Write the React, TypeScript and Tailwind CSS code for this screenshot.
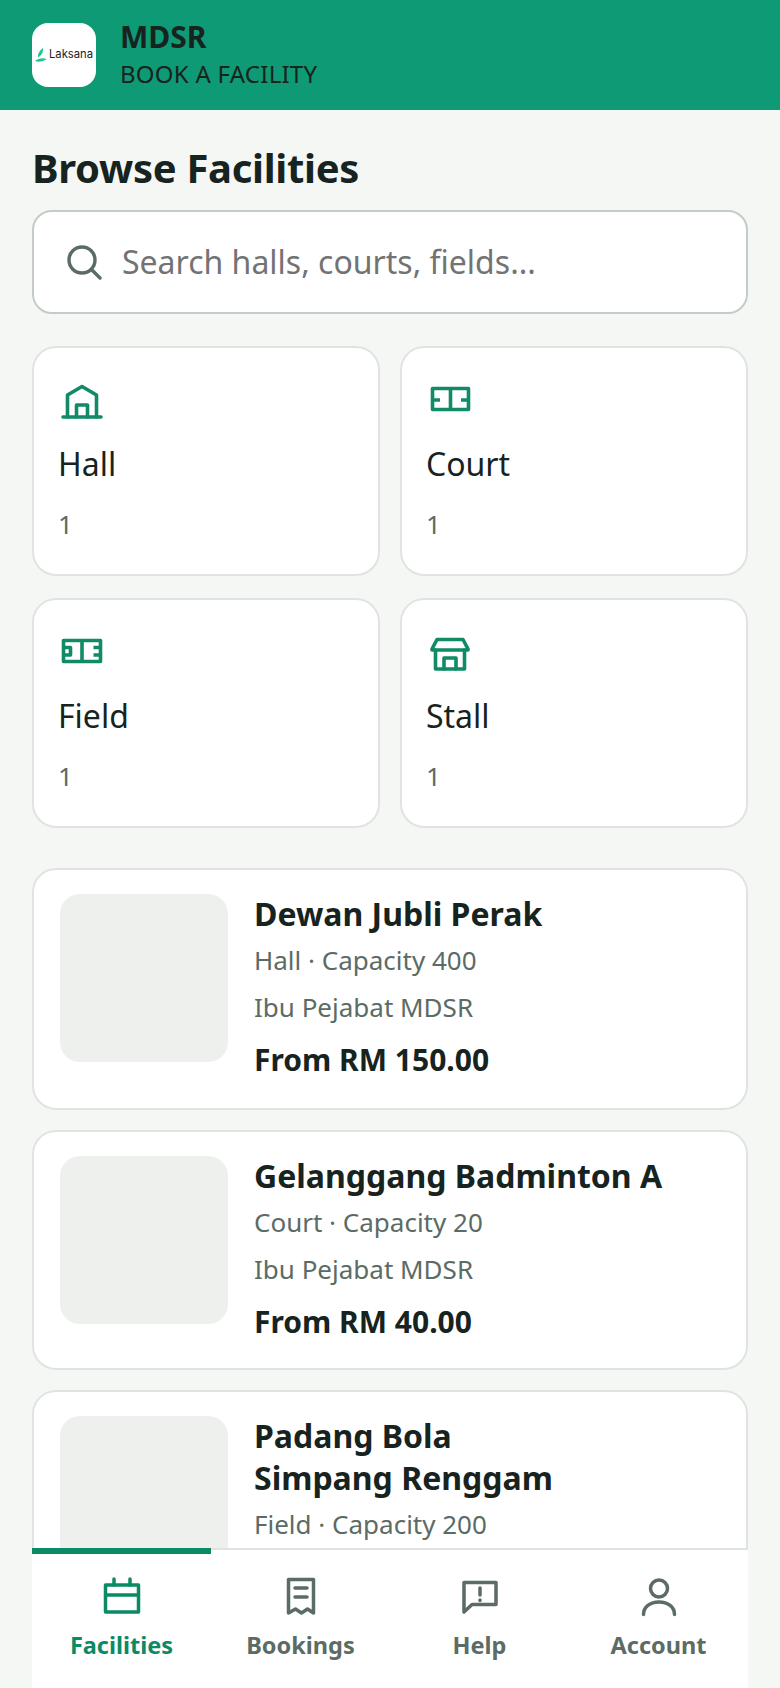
const categories = [
  { name: "Hall", icon: <HallIcon /> },
  { name: "Court", icon: <CourtIcon /> },
  { name: "Field", icon: <FieldIcon /> },
  { name: "Stall", icon: <StallIcon /> },
];

const facilities = [
  { name: ["Dewan Jubli Perak"], meta: "Hall · Capacity 400", place: "Ibu Pejabat MDSR", price: "From RM 150.00" },
  { name: ["Gelanggang Badminton A"], meta: "Court · Capacity 20", place: "Ibu Pejabat MDSR", price: "From RM 40.00" },
  { name: ["Padang Bola", "Simpang Renggam"], meta: "Field · Capacity 200", place: "Ibu Pejabat MDSR", price: "From RM 80.00" },
];

function HallIcon() {
  return (
    <svg width="48" height="48" viewBox="0 0 48 48" fill="none" stroke="currentColor" strokeWidth="3.600" strokeLinecap="round" strokeLinejoin="round">
      <path d="M5 39h38" />
      <path d="M9.500 39V17L24 8.500 38.500 17v22" />
      <path d="M18.500 39V27h11v12" />
    </svg>
  );
}

function CourtIcon() {
  return (
    <svg width="48" height="48" viewBox="0 0 48 48" fill="none" stroke="currentColor" strokeWidth="3.600" strokeLinejoin="round">
      <rect x="6.500" y="10.500" width="36" height="21" />
      <path d="M24.500 10.500v21M6.500 22H14M35 22h7.500" />
    </svg>
  );
}

function FieldIcon() {
  return (
    <svg width="48" height="48" viewBox="0 0 48 48" fill="none" stroke="currentColor" strokeWidth="3.600" strokeLinejoin="round">
      <rect x="5.500" y="10.500" width="37" height="21" />
      <path d="M24 10.500v21M5.500 17.500h7v7.500h-7M42.500 17.500h-7M42.500 25h-7" />
    </svg>
  );
}

function StallIcon() {
  return (
    <svg width="48" height="48" viewBox="0 0 48 48" fill="none" stroke="currentColor" strokeWidth="3.600" strokeLinecap="round" strokeLinejoin="round">
      <path d="M11 9.500h26l5 9.500v1H6v-1z" />
      <path d="M9.500 20v19h29V20" />
      <path d="M18 39V28h12v11" />
    </svg>
  );
}

function Logo() {
  return (
    <div className="flex h-16 w-16 shrink-0 items-center justify-center gap-[2px] rounded-2xl bg-white">
      <svg width="12" height="14" viewBox="0 0 12 14" fill="#1fc98c" className="shrink-0">
        <path d="M8 0C8.500 3.500 7 7 3 9.500 2.500 6 4.500 2.500 8 0z" />
        <path d="M0 13c3-2.500 7.500-3.500 11.500-2C8.500 13.500 3.500 14.500 0 13z" />
      </svg>
      <span className="text-[11.250px] leading-none text-[#222] [font-family:'Inter',sans-serif]">Laksana</span>
    </div>
  );
}

function NavItem({ label, active, children }: { label: string; active?: boolean; children: React.ReactNode }) {
  return (
    <div className={`relative flex flex-1 flex-col items-center pt-[22px] ${active ? "text-[#0b8a66]" : "text-[#5b6b65]"}`}>
      {active && <div className="absolute -top-[2px] left-0 right-0 h-[6px] bg-[#0b8a66]" />}
      {children}
      <span className="mt-[8px] text-[23.500px] font-bold leading-[34px]">{label}</span>
    </div>
  );
}

export default function App() {
  return (
    <div className="flex h-[1688px] w-[780px] flex-col overflow-hidden bg-[#f5f7f5] text-[#17231e] [font-family:'Noto_Sans',sans-serif]">
      <header className="flex h-[110px] shrink-0 items-center gap-6 bg-[#0e9a74] px-8">
        <Logo />
        <div className="-mt-[2px]">
          <div className="text-[30px] font-bold leading-[38px]">MDSR</div>
          <div className="mt-[2px] text-[24px] leading-[32px] tracking-[0.25px]">BOOK A FACILITY</div>
        </div>
      </header>

      <main className="min-h-0 flex-1 overflow-hidden px-8 pt-[31px]">
        <h1 className="text-[40px] font-bold leading-[54px] tracking-[-0.3px]">Browse Facilities</h1>

        <div className="mt-[15px] flex h-[104px] items-center gap-[20px] rounded-[20px] border-2 border-[#c5ccc8] bg-white px-[32px]">
          <svg width="36" height="36" viewBox="0 0 36 36" fill="none" stroke="#5b6b65" strokeWidth="3.400" strokeLinecap="round" className="shrink-0">
            <circle cx="16" cy="16" r="13" />
            <path d="M26 26l8 8" />
          </svg>
          <span className="text-[32px] text-[#737373]">Search halls, courts, fields...</span>
        </div>

        <div className="mt-[32px] grid grid-cols-2 gap-x-[20px] gap-y-[22px]">
          {categories.map((c) => (
            <div key={c.name} className="h-[230px] rounded-[24px] border-2 border-[#e0e4e1] bg-white px-6 pt-[30px]">
              <div className="h-[48px] text-[#118a67]">{c.icon}</div>
              <div className="mt-[16px] text-[32px] leading-[44px]">{c.name}</div>
              <div className="mt-[20px] text-[26px] leading-[36px] text-[#5b6b65]">1</div>
            </div>
          ))}
        </div>

        <div className="mt-[40px] flex flex-col gap-[20px]">
          {facilities.map((f) => (
            <div key={f.place + f.meta} className="flex gap-[26px] rounded-[24px] border-2 border-[#e0e4e1] bg-white px-[26px] py-[24px] first:pb-[26px]">
              <div className="h-[168px] w-[168px] shrink-0 rounded-[20px] bg-[#eef0ee]" />
              <div>
                <div className="-mt-[1px] text-[32px] font-bold leading-[42px]">
                  {f.name.map((line) => (
                    <div key={line}>{line}</div>
                  ))}
                </div>
                <div className="mt-[3px] text-[26px] leading-[44px] text-[#5b6b65]">{f.meta}</div>
                <div className="mt-[3px] text-[26px] leading-[44px] text-[#5b6b65]">{f.place}</div>
                <div className="mt-[9px] text-[30px] font-bold leading-[44px]">{f.price}</div>
              </div>
            </div>
          ))}
        </div>
      </main>

      <nav className="mx-8 flex h-[140px] shrink-0 border-t-2 border-[#e0e4e1] bg-white">
        <NavItem label="Facilities" active>
          <svg width="48" height="48" viewBox="0 0 48 48" fill="none" stroke="currentColor" strokeWidth="3.500" strokeLinejoin="round" strokeLinecap="round">
            <rect x="7.500" y="13" width="33" height="27" />
            <path d="M7.500 23h33M16 7v6M32 7v6" />
          </svg>
        </NavItem>
        <NavItem label="Bookings">
          <svg width="48" height="48" viewBox="0 0 48 48" fill="none" stroke="currentColor" strokeWidth="3.500" strokeLinejoin="round" strokeLinecap="round">
            <path d="M11.500 7.500h25V41l-6-4-6 4-6-4-7 4z" />
            <path d="M18 16h12M18 25h12" />
          </svg>
        </NavItem>
        <NavItem label="Help">
          <svg width="48" height="48" viewBox="0 0 48 48" fill="none" stroke="currentColor" strokeWidth="3.500" strokeLinejoin="round" strokeLinecap="round">
            <path d="M8 10.500h32v22H16L8 40z" />
            <path d="M24 16v7M24 28v.5" />
          </svg>
        </NavItem>
        <NavItem label="Account">
          <svg width="48" height="48" viewBox="0 0 48 48" fill="none" stroke="currentColor" strokeWidth="3.500" strokeLinecap="round">
            <circle cx="24" cy="16.500" r="8.500" />
            <path d="M8.500 42.500C8.500 35 15 30 24 30s15.500 5 15.500 12.500" />
          </svg>
        </NavItem>
      </nav>
    </div>
  );
}
